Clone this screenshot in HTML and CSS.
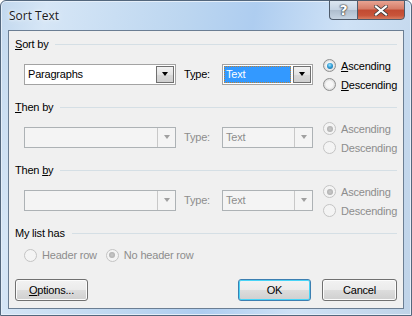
FILE: index.html
```html
<!DOCTYPE html>
<html>
<head>
<meta charset="utf-8">
<link rel="stylesheet" href="styles.css">
</head>
<body>
<div class="window">
  <div class="titlebar">
    <div class="title">Sort Text</div>
    <div class="caption-buttons">
      <div class="cbtn help">?</div>
      <div class="cbtn close">
        <svg width="14" height="11" viewBox="0 0 14 11"><path d="M2 1.5 L12 9.5 M12 1.5 L2 9.5" stroke="#3a3a3a" stroke-width="3.6" stroke-linecap="square"/><path d="M2 1.5 L12 9.5 M12 1.5 L2 9.5" stroke="#fff" stroke-width="2.2" stroke-linecap="square"/></svg>
      </div>
    </div>
  </div>
  <div class="client">
    <div class="group">
      <div class="ghead"><span><u>S</u>ort by</span><i class="sep"></i></div>
      <div class="gbody">
        <div class="combo wide"><span class="val">Paragraphs</span><span class="drop"><i class="arrow"></i></span></div>
        <span class="typelbl">T<u>y</u>pe:</span>
        <div class="combo narrow"><span class="val sel">Text</span><span class="drop"><i class="arrow"></i></span></div>
        <div class="radios">
          <label class="radio"><i class="rb on"></i><span><u>A</u>scending</span></label>
          <label class="radio"><i class="rb"></i><span><u>D</u>escending</span></label>
        </div>
      </div>
    </div>
    <div class="group">
      <div class="ghead"><span><u>T</u>hen by</span><i class="sep"></i></div>
      <div class="gbody dis">
        <div class="combo wide"><span class="val"></span><span class="drop"><i class="arrow"></i></span></div>
        <span class="typelbl">Type:</span>
        <div class="combo narrow"><span class="val">Text</span><span class="drop"><i class="arrow"></i></span></div>
        <div class="radios">
          <label class="radio"><i class="rb on"></i><span>Ascending</span></label>
          <label class="radio"><i class="rb"></i><span>Descending</span></label>
        </div>
      </div>
    </div>
    <div class="group">
      <div class="ghead"><span>Then <u>b</u>y</span><i class="sep"></i></div>
      <div class="gbody dis">
        <div class="combo wide"><span class="val"></span><span class="drop"><i class="arrow"></i></span></div>
        <span class="typelbl">Type:</span>
        <div class="combo narrow"><span class="val">Text</span><span class="drop"><i class="arrow"></i></span></div>
        <div class="radios">
          <label class="radio"><i class="rb on"></i><span>Ascending</span></label>
          <label class="radio"><i class="rb"></i><span>Descending</span></label>
        </div>
      </div>
    </div>
    <div class="group last">
      <div class="ghead"><span>My list has</span><i class="sep"></i></div>
      <div class="listrow dis">
        <label class="radio"><i class="rb"></i><span>Header row</span></label>
        <label class="radio"><i class="rb on"></i><span>No header row</span></label>
      </div>
    </div>
    <div class="buttons">
      <div class="btn"><u>O</u>ptions...</div>
      <div class="spacer"></div>
      <div class="btn def">OK</div>
      <div class="btn">Cancel</div>
    </div>
  </div>
</div>
</body>
</html>
```

FILE: styles.css
```css
* { box-sizing: border-box; }
html, body { margin: 0; padding: 0; }
body {
  width: 412px; height: 316px; overflow: hidden;
  font-family: "Liberation Sans", Arial, sans-serif;
  font-size: 11px;
  letter-spacing: -0.2px;
  color: #000;
}
.window {
  width: 412px; height: 316px;
  display: flex; flex-direction: column;
  background:
    linear-gradient(100deg, #c2d8ee 0%, #d6e6f6 10%, #bcd6f0 40%, #aecdf0 55%, #cfe2f6 75%, #bfd3e8 100%);
  border: 1px solid #53677d;
  border-radius: 6px 6px 0 0;
  box-shadow: inset 0 0 0 1px #e4eef9;
}
.titlebar {
  height: 29px; flex: none;
  display: flex; align-items: flex-start;
  padding-left: 8px;
}
.title {
  font-family: "Open Sans", sans-serif;
  font-size: 12px;
  letter-spacing: 0;
  padding-top: 6px;
  color: #1a1a1a;
  text-shadow: 0 0 6px #eaf3fc, 0 0 3px #fff;
  flex: 1;
}
.caption-buttons {
  display: flex; margin-right: 6px; margin-top: -1px;
}
.cbtn {
  height: 20px;
  border: 1px solid #4e5b6b;
  display: flex; align-items: center; justify-content: center;
}
.help {
  width: 28px;
  border-radius: 0 0 0 4px;
  border-right: none;
  background: linear-gradient(#dce6f0, #c5d3e2 50%, #aebdcd 51%, #c6d4e2);
  color: #fff; font-weight: bold; font-size: 14px;
  font-family: "DejaVu Sans", sans-serif;
  text-shadow: 0 0 1px #333, 0 0 1px #333, 0 0 2px #333;
}
.close {
  width: 48px;
  border-radius: 0 0 4px 0;
  background: linear-gradient(#e8a493, #d57b66 45%, #c14a32 50%, #c8543a 80%, #d77c60);
}
.client {
  flex: 1;
  margin: 0 7px 6px 7px;
  border: 1px solid #6b7e93;
  background: #f0f0f0;
  padding: 5px 6px 0 6px;
  display: flex; flex-direction: column;
}
.ghead {
  height: 16px; display: flex; align-items: center;
}
.ghead .sep {
  flex: 1; height: 1px; background: #d5dfe5; margin-left: 7px; margin-right: 0;
}
.gbody {
  height: 47px; padding: 0 0 3px 9px;
  display: flex; align-items: center;
}
.gbody > * { flex: none; }
.combo {
  height: 21px; border: 1px solid #a3a3a3; background: #fff;
  display: flex; align-items: stretch;
}
.combo.wide { width: 152px; }
.combo.narrow { width: 91px; }
.combo .val { flex: 1; padding-left: 2px; display: flex; align-items: center; margin: 1px; }
.combo .val.sel { background: #3399ff; color: #fff; outline: 1px dotted #c08030; outline-offset: -1px; }
.drop {
  width: 18px; margin: 1px; border: 1px solid #707070;
  background: linear-gradient(#f2f2f2, #e3e3e3 50%, #d8d8d8 51%, #cfcfcf);
  display: flex; align-items: center; justify-content: center;
}
.arrow {
  width: 0; height: 0;
  border-left: 3.5px solid transparent; border-right: 3.5px solid transparent;
  border-top: 4px solid #000;
}
.typelbl { width: 38px; margin-left: 8px; }
.radios { display: flex; flex-direction: column; margin-left: 10px; margin-top: 2px; }
.radio { display: flex; align-items: center; height: 19px; }
.rb {
  width: 13px; height: 13px; border-radius: 50%;
  border: 1px solid #8e8f8f;
  background: radial-gradient(circle at 50% 50%, #f6f6f6 0 40%, #dcdcdc 70%, #cacaca 100%);
  margin-right: 5px; position: relative; flex: none;
}
.rb.on::after {
  content: ""; position: absolute; left: 2.5px; top: 2.5px; width: 6px; height: 6px; border-radius: 50%;
  background: radial-gradient(circle at 45% 35%, #a9e4ff 0, #3aa6dc 40%, #0f5c93 100%);
}
.dis { color: #8d8d8d; }
.dis .combo { border-color: #adb2b5; background: #f4f4f4; }
.dis .drop { border: none; border-left: 1px solid #c8c8c8; margin: 0; background: transparent; }
.dis .arrow { border-top-color: #a0a0a0; }
.dis .rb { border-color: #c4c4c4; background: #f4f4f4; }
.dis .rb.on::after { background: radial-gradient(circle, #c9c9c9, #a8a8a8); }
.listrow {
  height: 28px; display: flex; align-items: center; padding-left: 9px; gap: 9px;
}
.buttons {
  display: flex; margin-top: 10px;
}
.spacer { flex: 1; }
.btn {
  width: 73px; height: 22px;
  border: 1px solid #707070; border-radius: 3px;
  background: linear-gradient(#f2f2f2, #ebebeb 50%, #dddddd 51%, #cfcfcf);
  display: flex; align-items: center; justify-content: center;
  box-shadow: inset 0 0 0 1px #fcfcfc;
}
.btn + .btn { margin-left: 11px; }
.btn.def { border-color: #3c7fb1; box-shadow: inset 0 0 0 1px #48d4f7; }
.buttons .btn:last-child { width: 75px; }
```
